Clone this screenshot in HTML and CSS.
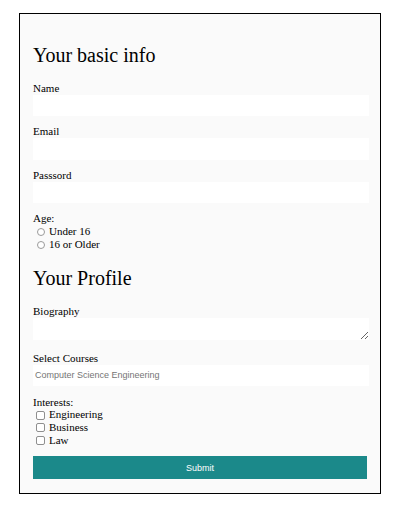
FILE: index.html
```html
<!DOCTYPE html>
<html>
<head>
<meta charset="utf-8">
<link rel="stylesheet" href="styles.css">
</head>
<body>
<form class="card">
  <h1 class="title">Your basic info</h1>
  <label class="lbl" for="name">Name</label>
  <input class="field" id="name" type="text">
  <label class="lbl" for="email">Email</label>
  <input class="field" id="email" type="email">
  <label class="lbl" for="pw">Passsord</label>
  <input class="field" id="pw" type="password">
  <div class="group">
    <div class="line">Age:</div>
    <label class="line"><input class="radio" type="radio" name="age">Under 16</label>
    <label class="line"><input class="radio" type="radio" name="age">16 or Older</label>
  </div>
  <h1 class="title second">Your Profile</h1>
  <label class="lbl" for="bio">Biography</label>
  <textarea class="area" id="bio"></textarea>
  <label class="lbl sel" for="courses">Select Courses</label>
  <input class="field courses" id="courses" type="text" placeholder="Computer Science Engineering">
  <div class="group interests">
    <div class="line2">Interests:</div>
    <label class="line2"><input class="check" type="checkbox">Engineering</label>
    <label class="line2"><input class="check" type="checkbox">Business</label>
    <label class="line2"><input class="check" type="checkbox">Law</label>
  </div>
  <button class="submit" type="button">Submit</button>
</form>
</body>
</html>
```
FILE: styles.css
```css
html, body {
  margin: 0;
  padding: 0;
  background: #ffffff;
}
body {
  font-family: "Liberation Serif", "Times New Roman", serif;
  font-size: 11px;
  color: #000;
}
.card {
  margin: 13px 0 0 19px;
  width: 336px;
  padding: 30px 11px 14px 13px;
  border: 1px solid #000;
  background: #fafafa;
  display: flex;
  flex-direction: column;
}
.title {
  font-size: 20px;
  font-weight: normal;
  line-height: 23px;
  margin: 0 0 14.5px 0;
}
.title.second {
  margin-top: 15.5px;
  margin-bottom: 15px;
}
.lbl {
  display: block;
  line-height: 13px;
  height: 13px;
}
.field {
  display: block;
  box-sizing: border-box;
  width: 336px;
  height: 21.5px;
  margin: 0 0 9px 0;
  border: none;
  background: #ffffff;
  outline: none;
  padding: 0 2px;
}
.group {
  display: flex;
  flex-direction: column;
}
.line {
  display: flex;
  align-items: center;
  line-height: 13px;
  height: 13px;
}
.line2 {
  display: flex;
  align-items: center;
  line-height: 12.7px;
  height: 12.7px;
}
.radio {
  appearance: none;
  -webkit-appearance: none;
  box-sizing: border-box;
  width: 8px;
  height: 8px;
  margin: 1px 4.5px 0 3.5px;
  border: 1px solid #9a9a9a;
  border-radius: 50%;
  background: #fff;
}
.check {
  appearance: none;
  -webkit-appearance: none;
  box-sizing: border-box;
  width: 9px;
  height: 9px;
  margin: 1px 4px 0 3px;
  border: 1px solid #8f8f8f;
  border-radius: 2px;
  background: #fff;
}
.area {
  display: block;
  box-sizing: border-box;
  width: 336px;
  height: 22.5px;
  margin: 0 0 11.5px 0;
  border: none;
  background: #fff;
  outline: none;
  padding: 0 2px;
  font-family: "Liberation Sans", Arial, sans-serif;
  font-size: 9px;
}
.courses {
  font-family: "Liberation Sans", Arial, sans-serif;
  font-size: 9px;
  margin-bottom: 9.5px;
}
.courses::placeholder {
  color: #757575;
}
.submit {
  margin-top: 9.8px;
  width: 334px;
  height: 23px;
  border: none;
  background: #1b898a;
  color: #ffffff;
  font-family: "Liberation Sans", Arial, sans-serif;
  font-size: 9px;
  padding: 0;
}
```
